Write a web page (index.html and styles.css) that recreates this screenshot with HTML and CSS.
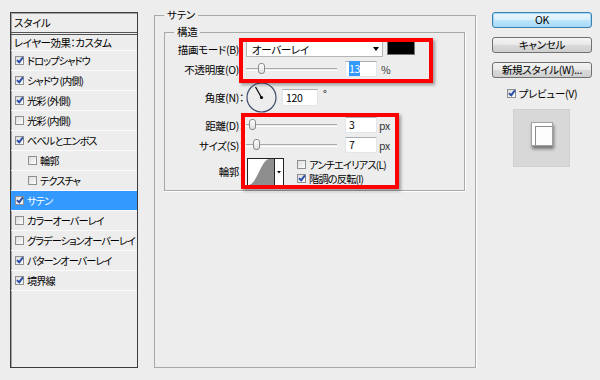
FILE: index.html
```html
<!DOCTYPE html>
<html lang="ja">
<head>
  <meta charset="UTF-8">
  <title>レイヤースタイル</title>
  <link rel="stylesheet" href="styles.css">
</head>
<body>
  <div class="dialog">

    <div class="styles">
      <div class="styles-head">スタイル</div>
      <div class="styles-sub">レイヤー効果：カスタム</div>
      <ul class="fx">
        <li><span class="cb on"></span>ドロップシャドウ</li>
        <li><span class="cb on"></span>シャドウ (内側)</li>
        <li><span class="cb on"></span>光彩 (外側)</li>
        <li><span class="cb"></span>光彩 (内側)</li>
        <li><span class="cb on"></span>ベベルとエンボス</li>
        <li class="sub"><span class="cb"></span>輪郭</li>
        <li class="sub"><span class="cb"></span>テクスチャ</li>
        <li class="sel"><span class="cb on"></span>サテン</li>
        <li><span class="cb"></span>カラーオーバーレイ</li>
        <li><span class="cb"></span>グラデーションオーバーレイ</li>
        <li><span class="cb on"></span>パターンオーバーレイ</li>
        <li><span class="cb on"></span>境界線</li>
      </ul>
    </div>

    <fieldset class="group outer">
      <legend>サテン</legend>
      <fieldset class="group inner">
        <legend>構造</legend>
        <div class="rows">
          <div class="row r-mode">
            <label>描画モード(B)：</label>
            <div class="select">オーバーレイ<span class="arrow"></span></div>
            <span class="swatch"></span>
          </div>
          <div class="row r-opacity">
            <label>不透明度(O)：</label>
            <div class="slider"><span class="thumb" style="left: 12px"></span></div>
            <div class="field"><span class="picked">13</span></div>
            <span class="unit">%</span>
          </div>
          <div class="row r-angle">
            <label>角度(N)：</label>
            <svg class="dial" width="31" height="31" viewBox="0 0 31 31">
              <circle cx="15.5" cy="15.5" r="14.5" fill="none" stroke="#3f4c6b" stroke-width="1.2"/>
              <line x1="15.5" y1="15.5" x2="9.5" y2="5" stroke="#000" stroke-width="1.2"/>
              <circle cx="15.5" cy="15.5" r="1.6" fill="#000"/>
            </svg>
            <div class="field wide">120</div>
            <span class="deg">°</span>
          </div>
          <div class="row r-dist">
            <label>距離(D)：</label>
            <div class="slider"><span class="thumb" style="left: 3px"></span></div>
            <div class="field">3</div>
            <span class="unit px">px</span>
          </div>
          <div class="row r-size">
            <label>サイズ(S)：</label>
            <div class="slider"><span class="thumb" style="left: 7px"></span></div>
            <div class="field">7</div>
            <span class="unit px">px</span>
          </div>
          <div class="row r-contour">
            <label>輪郭：</label>
            <svg class="contour" width="37" height="28" viewBox="0 0 37 28">
              <rect x="0.5" y="0.5" width="27" height="27" fill="#fff" stroke="#222"/>
              <path d="M1 27 C 10 27, 14 2, 22 1 L27 1 L27 27 Z" fill="#8e8e8e"/>
              <rect x="27.5" y="0.5" width="9" height="27" fill="#fff" stroke="#222"/>
              <path d="M30 13 L34 13 L32 15.5 Z" fill="#000"/>
            </svg>
            <div class="checks">
              <div class="check"><span class="cb"></span>アンチエイリアス(L)</div>
              <div class="check"><span class="cb on"></span>階調の反転(I)</div>
            </div>
          </div>

          <div class="mark mark-top"></div>
          <div class="mark mark-bottom"></div>
        </div>
      </fieldset>
    </fieldset>

    <div class="actions">
      <button class="btn default">OK</button>
      <button class="btn">キャンセル</button>
      <button class="btn">新規スタイル(W)...</button>
      <div class="check preview-check"><span class="cb on"></span>プレビュー(V)</div>
      <div class="preview">
        <div class="preview-square"></div>
      </div>
    </div>

  </div>
</body>
</html>
```

FILE: styles.css
```css
body {
  margin: 0;
  background: #ededed;
  font-family: "Noto Sans CJK JP", "Liberation Sans", sans-serif;
  font-size: 10.5px;
  letter-spacing: -0.3px;
  font-feature-settings: "palt";
  color: #000;
}

.dialog {
  display: flex;
  align-items: flex-start;
  gap: 16px;
  padding: 9px 0 0 10px;
}

/* left list */
.styles {
  box-sizing: border-box;
  width: 128px;
  height: 356px;
  margin-top: 3px;
  border: 1px solid #3c3c3c;
  box-shadow: inset 1px 1px 0 #a4a4a4;
}

.styles-head {
  height: 19px;
  line-height: 19px;
  padding-left: 3px;
  border-bottom: 3px double #555;
}

.styles-sub {
  height: 15px;
  line-height: 15px;
  padding-left: 3px;
  letter-spacing: -0.5px;
  border-bottom: 1px solid #fbfbfb;
}

.fx {
  list-style: none;
  margin: 0;
  padding: 0;
}

.fx li {
  display: flex;
  align-items: center;
  gap: 3px;
  height: 19px;
  padding-left: 4px;
  font-size: 10.2px;
  letter-spacing: -0.95px;
  border-bottom: 1px solid #fbfbfb;
  white-space: nowrap;
}

.fx li.sub {
  padding-left: 17px;
}

.fx li.sel {
  background: #3399ff;
  color: #fff;
}

/* checkbox */
.cb {
  position: relative;
  flex: none;
  box-sizing: border-box;
  width: 9px;
  height: 9px;
  border: 1px solid #8e8f8f;
  background: linear-gradient(135deg, #dcdcdc, #fdfdfd);
}

.cb.on::after {
  content: "";
  position: absolute;
  left: 2px;
  top: -1px;
  width: 2px;
  height: 5px;
  border: solid #2c4fa8;
  border-width: 0 2px 2px 0;
  transform: rotate(38deg);
}

/* group boxes */
.group {
  box-sizing: border-box;
  margin: 0;
  min-width: 0;
  border: 1px solid #a8a8a8;
  box-shadow: 1px 1px 0 #fff;
}

.group legend {
  padding: 0 3px;
  line-height: 12px;
}

.outer {
  width: 322px;
  height: 359px;
  padding: 5px 9px 0 9px;
}

.inner {
  width: 301px;
  padding: 0 0 5px 0;
}

.inner legend {
  margin-left: 9px;
}

.rows {
  position: relative;
  display: flex;
  flex-direction: column;
  padding-top: 3px;
}

.row {
  display: flex;
  align-items: center;
}

.row label {
  flex: none;
  width: 79px;
  margin-right: 2px;
  text-align: right;
  white-space: nowrap;
}

.r-mode { height: 16px; }
.r-opacity { height: 16px; margin-top: 4px; }
.r-angle { height: 30px; margin-top: 5px; }
.r-dist { height: 16px; margin-top: 5px; }
.r-size { height: 16px; margin-top: 4px; }
.r-contour { height: 27px; margin-top: 5px; }

.select {
  box-sizing: border-box;
  display: flex;
  align-items: center;
  width: 137px;
  height: 16px;
  padding-left: 5px;
  background: #fff;
  border: 1px solid #b4b4b4;
}

.arrow {
  margin-left: auto;
  margin-right: 3px;
  border-left: 3px solid transparent;
  border-right: 3px solid transparent;
  border-top: 4px solid #000;
}

.swatch {
  align-self: flex-start;
  width: 26px;
  height: 14px;
  margin: -1px 0 0 5px;
  background: #000;
  box-shadow: 0 0 0 1px #777;
}

.slider {
  position: relative;
  width: 91px;
  height: 1px;
  margin-right: 8px;
  border-top: 1px solid #a9a9a9;
  border-bottom: 1px solid #fff;
}

.thumb {
  position: absolute;
  top: -6px;
  box-sizing: border-box;
  width: 7px;
  height: 11px;
  border: 1px solid #8a8a8a;
  border-radius: 3px;
  background: linear-gradient(#fff, #dedede);
}

.field {
  box-sizing: border-box;
  width: 32px;
  height: 16px;
  padding-left: 3px;
  line-height: 14px;
  background: #fff;
  border: 1px solid #e2e6ea;
  border-top-color: #abadb3;
}

.field.wide {
  width: 36px;
  height: 17px;
  line-height: 15px;
}

.picked {
  background: #3399ff;
  color: #fff;
}

.unit {
  margin-left: 4px;
  color: #333;
}

.unit.px {
  margin-left: 2px;
}

.dial {
  flex: none;
  margin-right: 5px;
}

.deg {
  align-self: flex-start;
  margin: 4px 0 0 5px;
}

.contour {
  flex: none;
  margin-left: 1px;
}

.checks {
  display: flex;
  flex-direction: column;
  margin-left: 13px;
}

.check {
  display: flex;
  align-items: center;
  gap: 3px;
  height: 14px;
  font-size: 10.2px;
  letter-spacing: -0.8px;
  white-space: nowrap;
}

/* red annotation frames */
.mark {
  position: absolute;
  box-sizing: border-box;
  border: 4px solid #ff0000;
  box-shadow: 2px 2px 3px rgba(0, 0, 0, 0.35);
}

.mark-top {
  left: 74px;
  top: 0;
  width: 194px;
  height: 45px;
}

.mark-bottom {
  left: 76px;
  top: 75px;
  width: 158px;
  height: 76px;
}

/* right column */
.actions {
  display: flex;
  flex-direction: column;
  align-items: center;
  width: 100px;
  margin-top: 3px;
}

.btn {
  box-sizing: border-box;
  width: 100px;
  height: 16px;
  margin-bottom: 9px;
  padding: 0;
  font: inherit;
  letter-spacing: inherit;
  line-height: 14px;
  color: #000;
  border: 1px solid #707070;
  border-radius: 3px;
  background: linear-gradient(#f4f4f4 0%, #e8e8e8 50%, #dadada 51%, #cfcfcf 100%);
}

.btn.default {
  border-color: #3c7fb1;
  background: linear-gradient(#eaf6fd 0%, #d9f0fc 50%, #bee6fd 51%, #a7d9f5 100%);
  box-shadow: inset 0 0 0 1px #9fd9f6;
}

.preview-check {
  margin-top: -1px;
  font-size: 10.5px;
  letter-spacing: -0.3px;
}

.preview {
  display: flex;
  align-items: center;
  justify-content: center;
  width: 57px;
  height: 58px;
  margin-top: 9px;
  margin-left: -1px;
  background: #d8d8d8;
  box-shadow: inset 0 0 0 1px #cfcfcf;
}

.preview-square {
  box-sizing: border-box;
  width: 22px;
  height: 24px;
  margin-top: -8px;
  background: #fdfdfd;
  border: 1px solid #a0a0a0;
  box-shadow: 1px 3px 3px rgba(0, 0, 0, 0.45), inset 3px 3px 0 #fff, inset 4px 4px 0 #8c8c8c;
}
```
